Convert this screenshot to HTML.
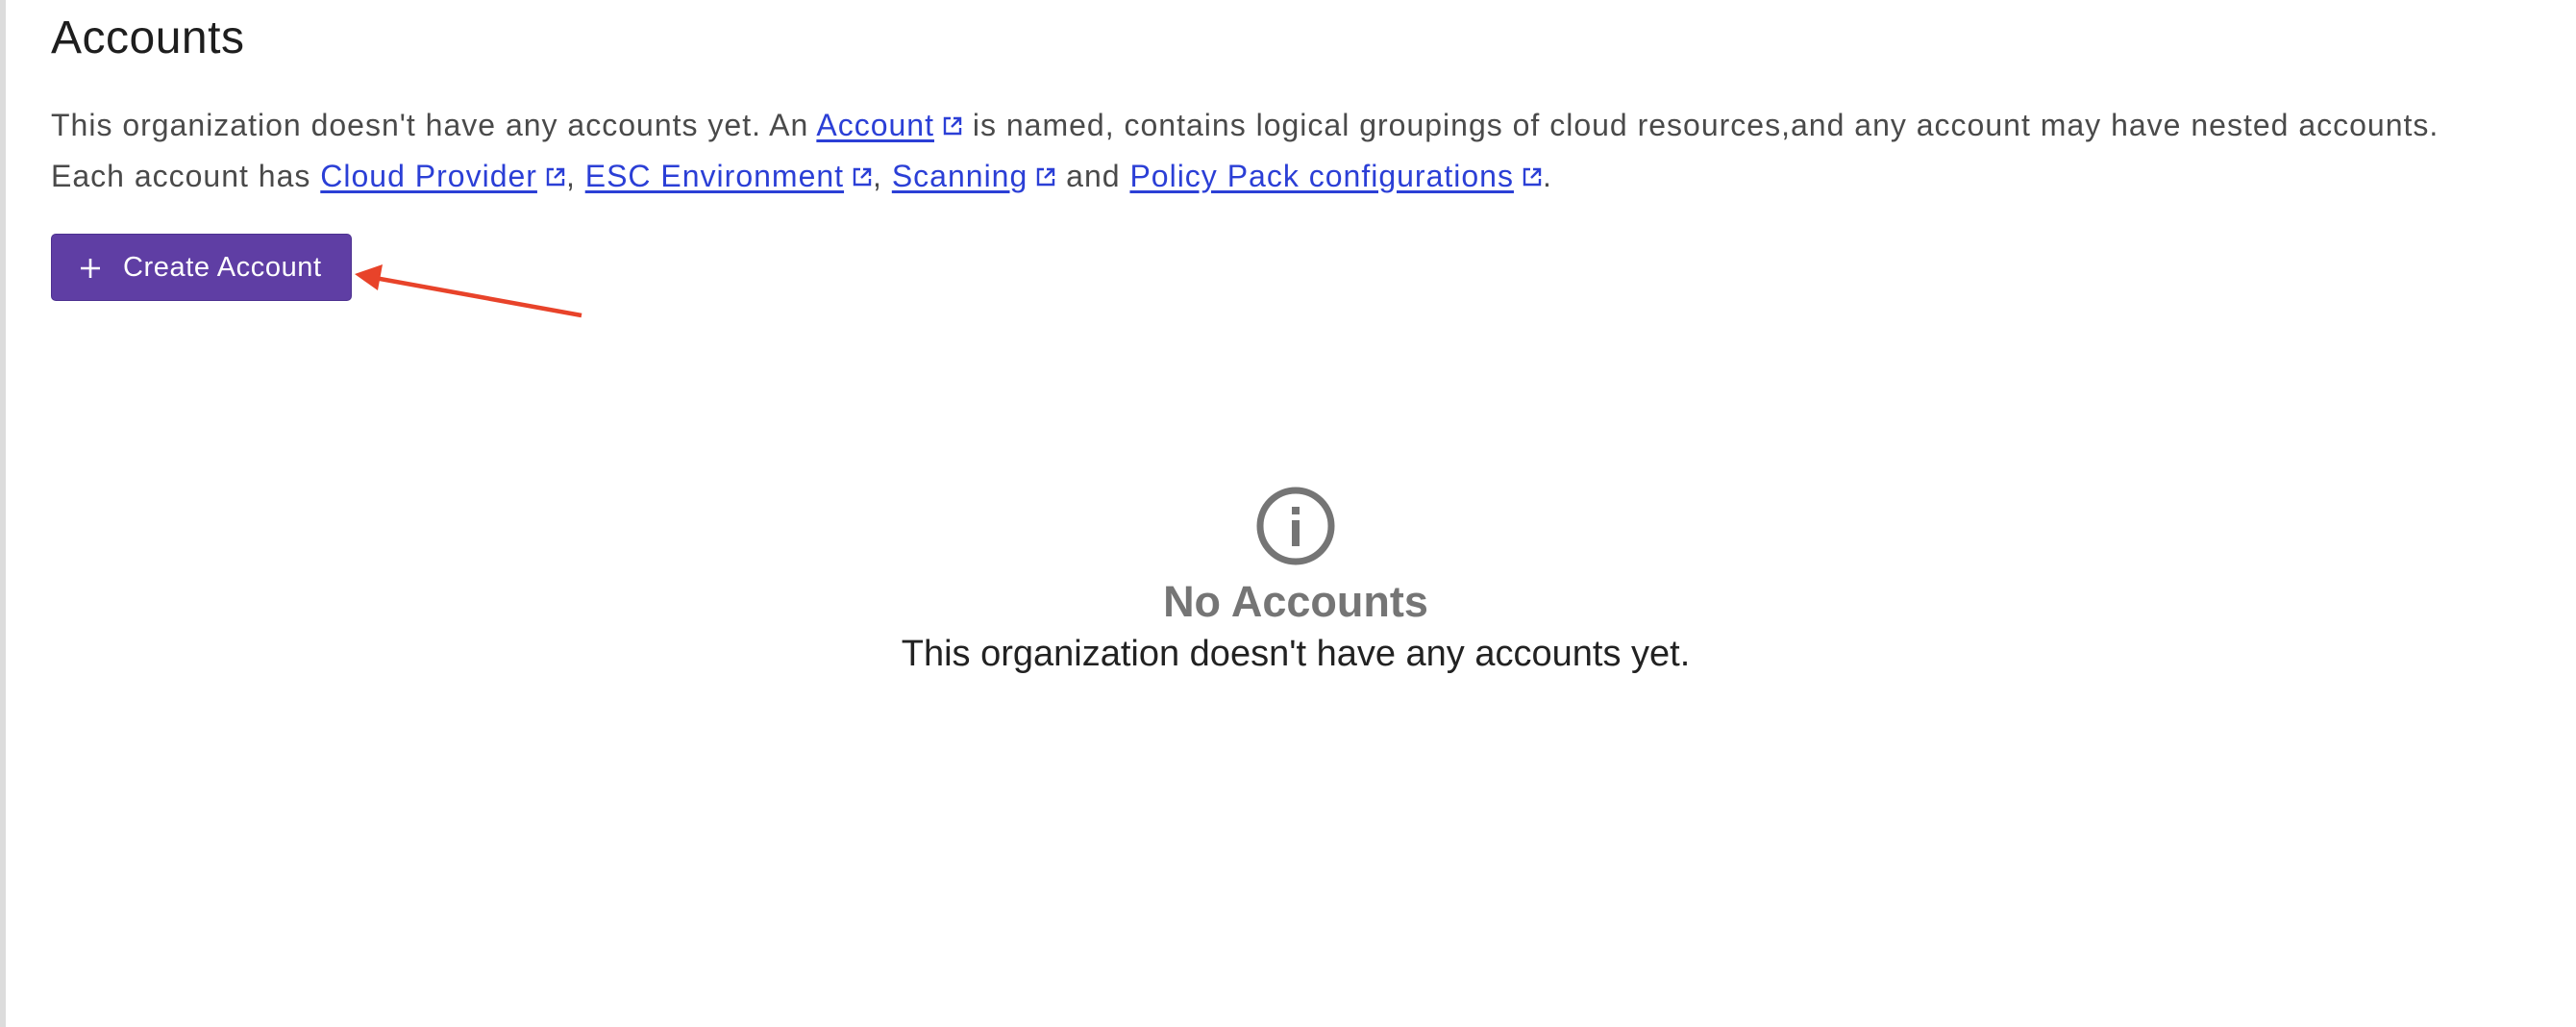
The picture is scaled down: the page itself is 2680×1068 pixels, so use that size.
<!DOCTYPE html>
<html><head><meta charset="utf-8"><style>
html,body{margin:0;padding:0;width:2680px;height:1068px;background:#fff;overflow:hidden;font-family:"Liberation Sans",sans-serif;}
.bar{position:absolute;left:0;top:0;width:6px;height:1068px;background:#dcdcdc;}
h1{position:absolute;left:53px;top:12px;margin:0;font-weight:400;font-size:48px;color:#1e1e1e;letter-spacing:0.5px;}
p.d{position:absolute;left:53px;top:104px;margin:0;font-size:32px;line-height:53px;color:#4a4a4a;white-space:nowrap;letter-spacing:1.0px;}
a{color:#2b3fd6;text-decoration:underline;text-underline-offset:4px;}
.ext{display:inline-block;width:22px;height:22px;vertical-align:-1px;margin-left:8px;}
.btn{position:absolute;left:53px;top:243px;width:313px;height:70px;background:#5f3ea4;border:1px solid #4d3190;box-sizing:border-box;border-radius:5px;color:#fff;font-size:29px;letter-spacing:0.6px;}
.btn span{position:absolute;left:74px;top:18px;}
.icon{position:absolute;left:1306px;top:505px;}
.t{position:absolute;left:0;width:2696px;text-align:center;}
</style></head><body>
<div class="bar"></div>
<h1>Accounts</h1>
<p class="d">This organization doesn't have any accounts yet. An <a>Account</a><svg class="ext" viewBox="0 0 22 22"><path d="M9 3H3v16h16v-6M12 3h7v7M19 3l-9 9" fill="none" stroke="#2b3fd6" stroke-width="2.4"/></svg> is named, contains logical groupings of cloud resources,and any account may have nested accounts.<br>Each account has <a>Cloud Provider</a><svg class="ext" viewBox="0 0 22 22"><path d="M9 3H3v16h16v-6M12 3h7v7M19 3l-9 9" fill="none" stroke="#2b3fd6" stroke-width="2.4"/></svg>, <a>ESC Environment</a><svg class="ext" viewBox="0 0 22 22"><path d="M9 3H3v16h16v-6M12 3h7v7M19 3l-9 9" fill="none" stroke="#2b3fd6" stroke-width="2.4"/></svg>, <a>Scanning</a><svg class="ext" viewBox="0 0 22 22"><path d="M9 3H3v16h16v-6M12 3h7v7M19 3l-9 9" fill="none" stroke="#2b3fd6" stroke-width="2.4"/></svg> and <a>Policy Pack configurations</a><svg class="ext" viewBox="0 0 22 22"><path d="M9 3H3v16h16v-6M12 3h7v7M19 3l-9 9" fill="none" stroke="#2b3fd6" stroke-width="2.4"/></svg>.</p>
<div class="btn"><svg style="position:absolute;left:29px;top:24px" width="22" height="22" viewBox="0 0 22 22"><path d="M11 1v20M1 11h20" stroke="#fff" stroke-width="2.6"/></svg><span>Create Account</span></div>
<svg style="position:absolute;left:0;top:0" width="700" height="400"><path d="M605 328L390 289" stroke="#e8432a" stroke-width="4.5"/><path d="M369 285L398 275L393 302Z" fill="#e8432a"/></svg>
<svg class="icon" width="84" height="84" viewBox="0 0 84 84"><circle cx="42" cy="42" r="37" fill="none" stroke="#757575" stroke-width="7"/><rect x="38" y="22" width="8" height="8" fill="#757575"/><rect x="38" y="36" width="8" height="27" fill="#757575"/></svg>
<div class="t" style="top:600px;font-size:45px;font-weight:700;color:#757575;">No Accounts</div>
<div class="t" style="top:659px;font-size:38px;color:#222;">This organization doesn't have any accounts yet.</div>
</body></html>
